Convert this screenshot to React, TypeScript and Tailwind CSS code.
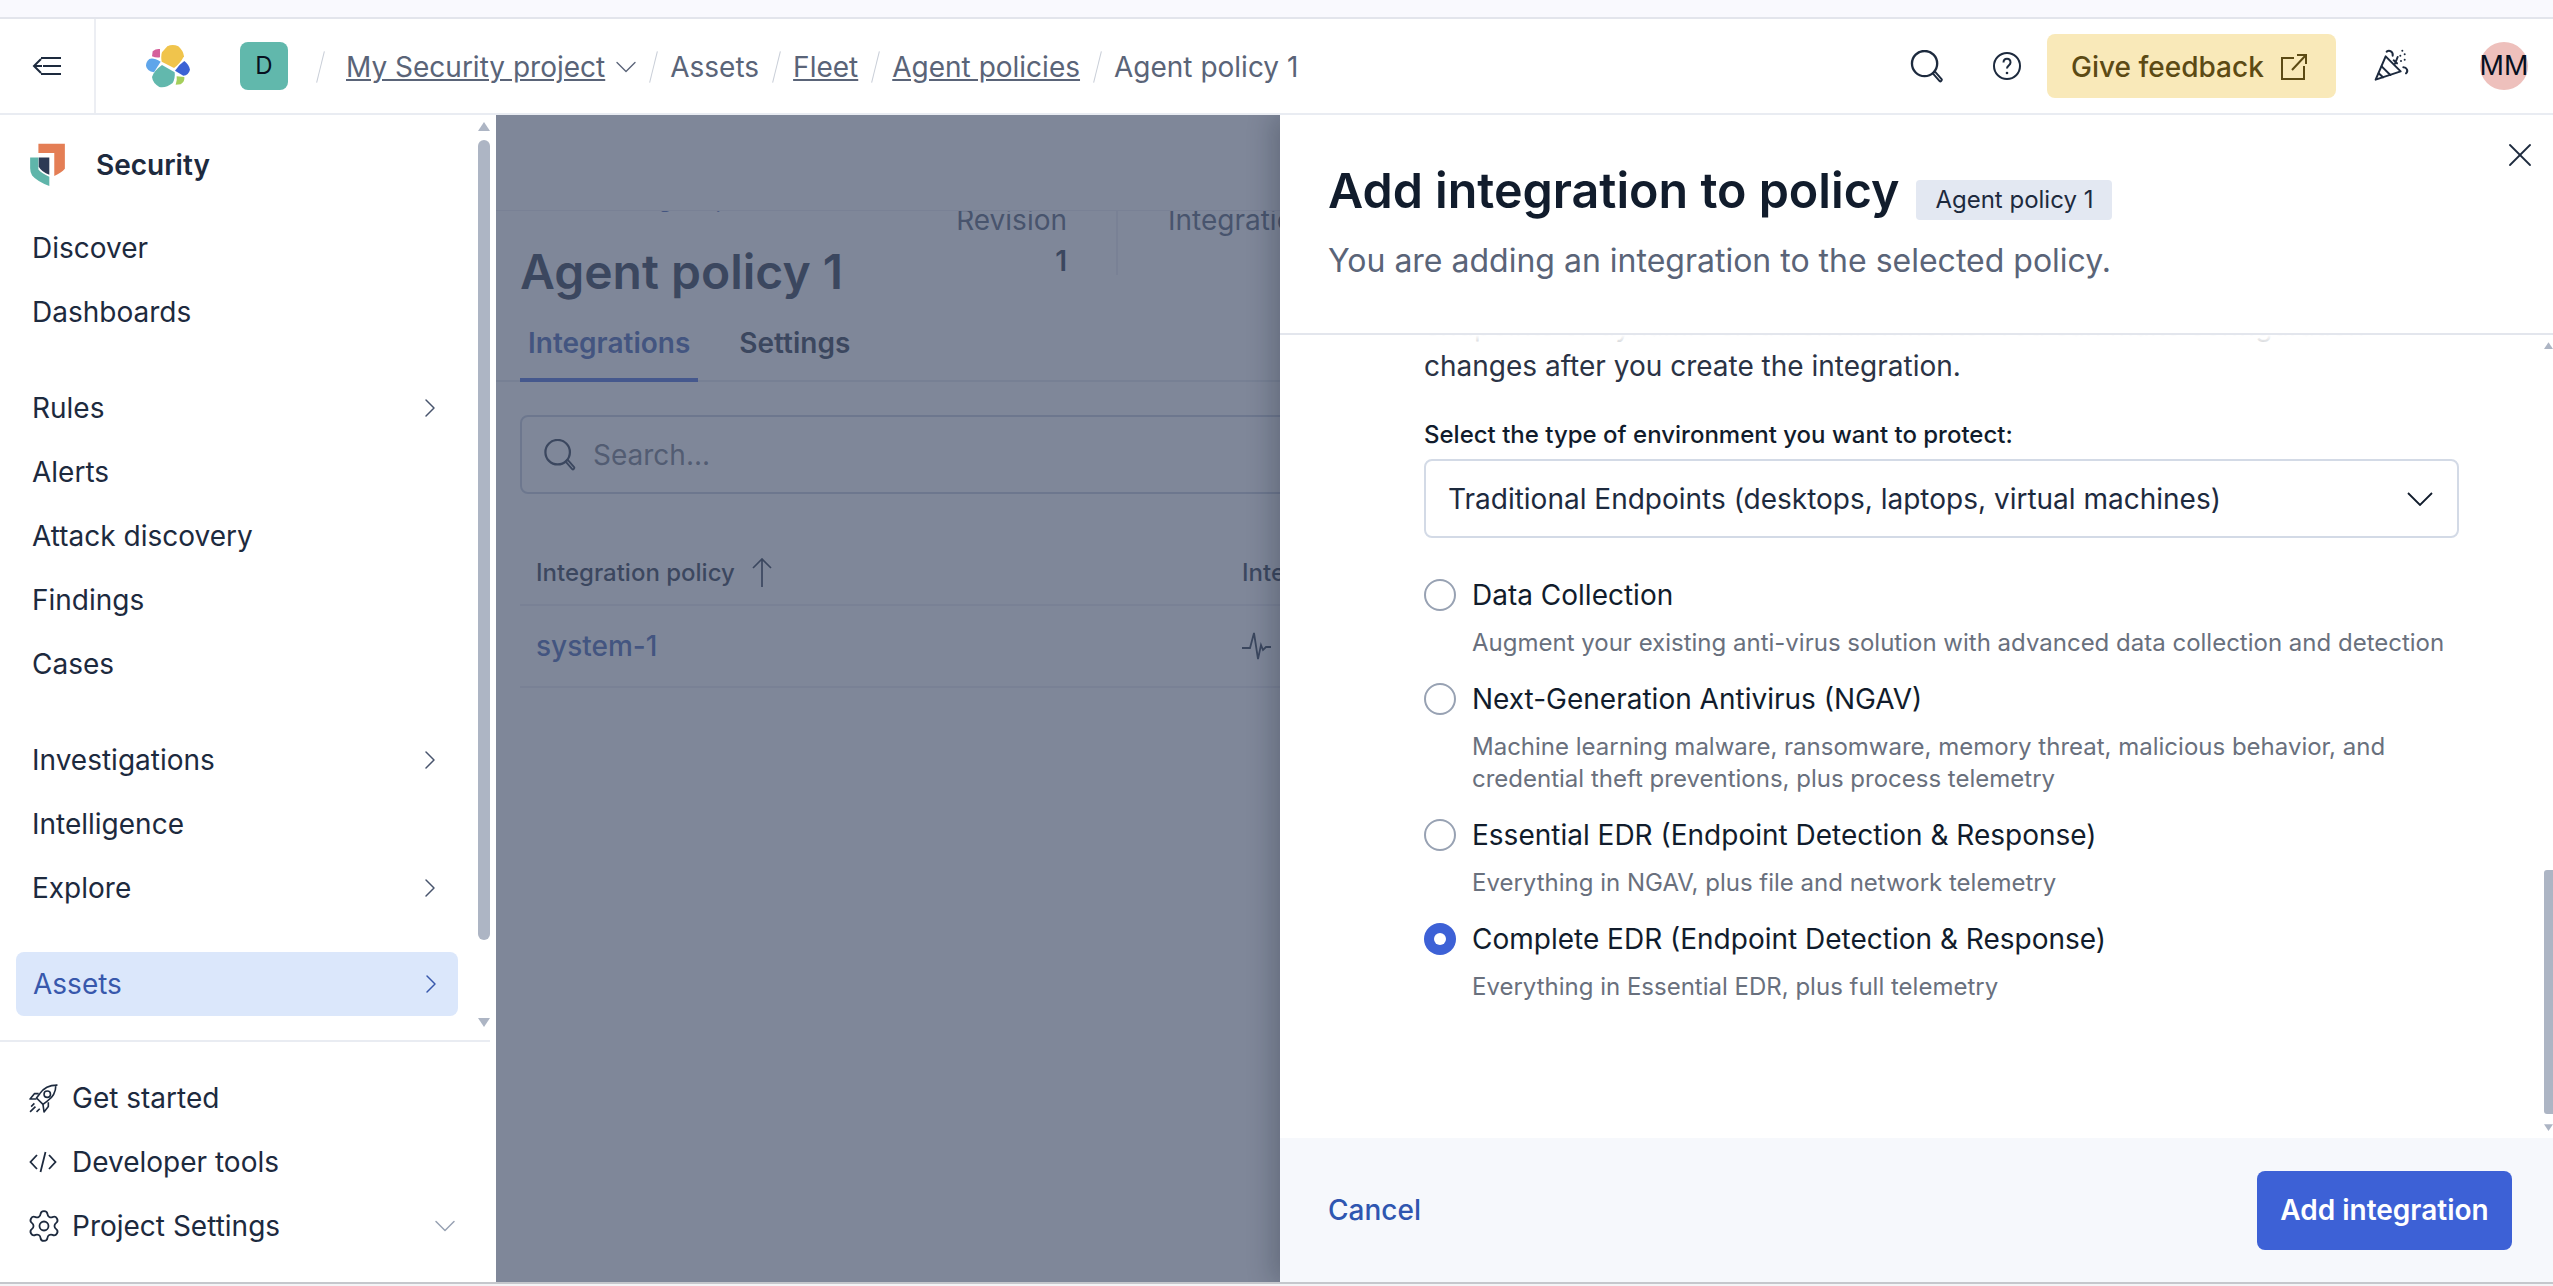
import React from 'react';
import { ChevronDown, ChevronRight, Settings, X } from 'lucide-react';

const navGroups = [
  [{ label: 'Discover' }, { label: 'Dashboards' }],
  [
    { label: 'Rules', arrow: true },
    { label: 'Alerts' },
    { label: 'Attack discovery' },
    { label: 'Findings' },
    { label: 'Cases' },
  ],
  [{ label: 'Investigations', arrow: true }, { label: 'Intelligence' }, { label: 'Explore', arrow: true }],
];

const radios = [
  { label: 'Data Collection', desc: ['Augment your existing anti-virus solution with advanced data collection and detection'] },
  {
    label: 'Next-Generation Antivirus (NGAV)',
    desc: ['Machine learning malware, ransomware, memory threat, malicious behavior, and', 'credential theft preventions, plus process telemetry'],
  },
  { label: 'Essential EDR (Endpoint Detection & Response)', desc: ['Everything in NGAV, plus file and network telemetry'] },
  { label: 'Complete EDR (Endpoint Detection & Response)', desc: ['Everything in Essential EDR, plus full telemetry'], checked: true },
];

const SearchIcon = ({ className }: { className?: string }) => (
  <svg viewBox="0 0 34 34" fill="none" stroke="currentColor" strokeWidth="2.4" className={className}>
    <ellipse cx="14.5" cy="14" rx="13" ry="13" />
    <path d="M23 24l2-2 7 8c.8 1-.9 3-2 2z" strokeWidth="2" strokeLinejoin="round" />
  </svg>
);

const ElasticLogo = () => (
  <svg viewBox="45 25 138 135" className="h-[45px] w-[46px]">
    <path d="M112 32Q128 24 145 32 160 45 162 62 150 85 132 97L95 78Q92 60 96 50z" fill="#f0c44c" />
    <path d="M68 47Q78 38 90 40L90 65Q78 67 66 62z" fill="#d5609b" />
    <path d="M58 70Q70 65 92 78L72 110Q50 105 48 90 48 78 58 70z" fill="#5fa5ea" />
    <path d="M163 76Q178 88 180 102 176 118 160 120L135 105Q145 88 163 76z" fill="#3b62d4" />
    <path d="M96 88L134 110Q136 128 128 142 108 158 88 154 68 142 66 124 72 105 96 88z" fill="#62b8ad" />
    <path d="M140 122L163 124Q165 138 152 146L137 147Q142 135 140 122z" fill="#a5cf5b" />
  </svg>
);

const SecurityLogo = () => (
  <svg viewBox="30 20 105 130" className="h-[43px] w-[35px] shrink-0">
    <path d="M55 22H135V98Q125 110 103 120V50H55z" fill="#e47e55" />
    <path d="M30 64H55V100Q65 112 88 122V150Q50 135 36 118 30 108 30 96z" fill="#5fb5aa" />
    <path d="M56 64H88V116Q65 108 56 92z" fill="#2c3a55" />
  </svg>
);

const RocketIcon = () => (
  <svg viewBox="0 0 27 27" fill="none" stroke="currentColor" strokeWidth="1.500" strokeLinejoin="round" className="h-[29px] w-[29px]">
    <path d="M26 1c-6 0-12 2-16 8l-3 4 6 6 4-3c6-4 8-10 8-15z" />
    <path d="M9 9H5l-4 5 6 0M18 17v4l-4 5-1-7" />
    <circle cx="17" cy="9.500" r="3" />
    <path d="M2 21l3-3M1 26l5-5M7 26l3-3" />
  </svg>
);

const CodeIcon = () => (
  <svg viewBox="0 0 28 22" fill="none" stroke="currentColor" strokeWidth="1.800" className="h-[22px] w-[28px]">
    <path d="M8 4L1.500 11 8 18M20 4l6.500 7L20 18M16.500 1L11.500 21" />
  </svg>
);

const PartyIcon = () => (
  <svg viewBox="0 0 165 150" fill="none" stroke="#1d2a3e" strokeWidth="6" strokeLinejoin="round" strokeLinecap="round" className="h-[50px] w-[55px]">
    <path d="M32 122L62 52l45 45z" />
    <path d="M50 82l26 26M41 103l13 12" />
    <path d="M65 38c8-6 20 0 18 12M90 74l8-20M86 64l10 9M115 85c10 0 16 10 8 18" />
    <g fill="#1d2a3e" stroke="none">
      <circle cx="112" cy="35" r="3" />
      <circle cx="119" cy="46" r="3" />
      <circle cx="106" cy="50" r="3" />
      <circle cx="119" cy="62" r="3" />
      <circle cx="108" cy="66" r="3" />
    </g>
  </svg>
);

const ScrollArrow = ({ down }: { down?: boolean }) => (
  <svg viewBox="0 0 12 9" className="h-[9px] w-full shrink-0">
    <path d={down ? 'M0 0h12L6 9z' : 'M6 0l6 9H0z'} fill="#adb5c4" />
  </svg>
);

const Slash = () => <span className="mx-[16.5px] h-[32px] w-px rotate-[14deg] bg-[#c9ced8]" />;

const App = () => {
  return (
    <div className="flex h-[1286px] w-[2553px] flex-col overflow-hidden bg-white font-['Inter',sans-serif] text-[28px] text-[#1d2a3e]">
      <div className="h-[19px] shrink-0 border-b-2 border-[#e3e5ec] bg-[#f9f9fe]" />

      {/* top bar */}
      <header className="relative z-20 flex h-[96px] shrink-0 items-center border-b-2 border-[#e9ecf2] bg-white">
        <div className="flex h-full w-[96px] items-center justify-center border-r-2 border-[#eceef3]">
          <svg viewBox="0 0 30 22" fill="none" stroke="#1d2a3e" strokeWidth="2" className="h-[22px] w-[30px]">
            <path d="M9 3h20M9 19h20M11 11h18M9 4l-7 7 7 7M2 11h8" />
          </svg>
        </div>
        <div className="ml-[49px]">
          <ElasticLogo />
        </div>
        <div className="ml-[49px] flex h-[48px] w-[48px] items-center justify-center rounded-lg bg-[#61b8ac] text-[24px] text-[#07101f]">D</div>
        <nav className="ml-[15px] mt-[2px] flex items-center text-[#5a6478]">
          <Slash />
          <span className="ml-[9px] underline">My Security project</span>
          <ChevronDown className="ml-[3px] -mr-[8px] h-[36px] w-[36px]" strokeWidth={0.9} />
          <Slash />
          <span>Assets</span>
          <Slash />
          <span className="underline">Fleet</span>
          <Slash />
          <span className="underline">Agent policies</span>
          <Slash />
          <span>Agent policy 1</span>
        </nav>
        <div className="ml-auto flex items-center">
          <SearchIcon className="h-[33px] w-[34px] text-[#1d2a3e]" />
          <svg viewBox="0 0 30 30" fill="none" stroke="#1d2a3e" strokeWidth="2" className="ml-[48px] h-[30px] w-[30px]">
            <circle cx="15" cy="15" r="13" />
            <path d="M11.5 11.5c0-5 7-5 7 0 0 3-3.500 3-3.500 6" />
            <circle cx="15" cy="22" r="1.300" fill="#1d2a3e" stroke="none" />
          </svg>
          <button className="ml-[25px] flex h-[64px] w-[289px] items-center rounded-lg bg-[#f9e9b9] pl-[24px] pt-[2px] font-medium text-[#5c4a14]">
            Give feedback
            <svg viewBox="0 0 28 28" fill="none" stroke="currentColor" strokeWidth="2" className="ml-[16px] h-[28px] w-[28px]">
              <path d="M14 5H2v21h22V13M17 2h9v9M26 2L12 17" />
            </svg>
          </button>
          <div className="-mt-[4px] ml-[29px]">
            <PartyIcon />
          </div>
          <div className="ml-[60px] mr-[25px] flex h-[48px] w-[48px] items-center justify-center rounded-full bg-[#eec0bc] text-[27px] text-[#07101f]">MM</div>
        </div>
      </header>

      <div className="flex min-h-0 flex-1">
        {/* side nav */}
        <aside className="flex w-[496px] shrink-0 flex-col border-r-[6px] border-white bg-white">
          <div className="flex min-h-0 flex-1">
            <div className="min-w-0 flex-1">
              <div className="flex h-[101px] items-center gap-[31px] pb-[2px] pl-[30px] font-semibold">
                <SecurityLogo />
                <span>Security</span>
              </div>
              {navGroups.map((group, i) => (
                <div key={i} className="mb-[32px]">
                  {group.map((item) => (
                    <div key={item.label} className="flex h-[64px] items-center justify-between pl-[32px] pr-[32px]">
                      {item.label}
                      {item.arrow && <ChevronRight className="h-[32px] w-[32px] text-[#48546d]" strokeWidth={1.1} />}
                    </div>
                  ))}
                </div>
              ))}
              <div className="ml-[16px] flex h-[64px] w-[442px] items-center justify-between rounded-lg bg-[#dbe7fb] pl-[17px] pr-[11px] text-[#3858ac]">
                Assets
                <ChevronRight className="h-[32px] w-[32px]" strokeWidth={1.1} />
              </div>
            </div>
            <div className="flex w-[12px] flex-col pb-[13px] pt-[7px]">
              <ScrollArrow />
              <div className="mt-[9px] h-[800px] rounded-full bg-[#adb5c4]" />
              <div className="flex-1" />
              <ScrollArrow down />
            </div>
          </div>
          <div className="h-[242px] shrink-0 border-t-2 border-[#e9ecf2] pt-[24px]">
            {[
              { label: 'Get started', icon: <RocketIcon /> },
              { label: 'Developer tools', icon: <CodeIcon /> },
              { label: 'Project Settings', icon: <Settings className="-ml-[3px] h-[36px] w-[36px]" strokeWidth={1.2} /> },
            ].map((item, i) => (
              <div key={item.label} className="flex h-[64px] items-center pl-[29px] pr-[27px]">
                <span className="flex w-[43px] shrink-0">{item.icon}</span>
                {item.label}
                {i === 2 && <ChevronDown className="ml-auto h-[36px] w-[36px] text-[#98a2b3]" strokeWidth={1} />}
              </div>
            ))}
          </div>
        </aside>

        {/* main page, dimmed behind the flyout */}
        <main className="relative flex min-w-0 flex-1 flex-col overflow-hidden bg-white">
          <div className="h-[95px] shrink-0" />
          <div className="min-h-0 flex-1 overflow-hidden border-t border-[#e9ecf2]">
            <div className="-mt-[28px] flex pl-[24px]">
              <div className="w-[547px]">
                <div className="flex h-[32px] items-center pl-[30px] text-[24px] text-[#3858ac]">View all agent policies</div>
                <div className="mt-[27px] text-[48px] font-semibold leading-[60px]">Agent policy 1</div>
              </div>
            </div>
            <div className="-mt-[97px] flex pl-[24px]">
              <div className="w-[547px] text-right text-[#48546d]">
                <div className="h-[38px] leading-[30px]">Revision</div>
                <div className="font-semibold leading-[36px] text-[#1d2a3e]">1</div>
              </div>
              <div className="ml-[49px] h-[70px] border-l-2 border-[#e9ecf2] pl-[50px] leading-[30px] text-[#48546d]">Integrations</div>
            </div>
            <div className="mt-[43px] flex h-[60px] gap-[33px] border-b-2 border-[#e3e6ed] pl-[24px] font-semibold">
              <div className="h-[60px] border-b-[4px] border-[#3d61d6] px-[8px] text-[#3858ac]">Integrations</div>
              <div className="px-[8px]">Settings</div>
            </div>
            <div className="mx-[24px] mt-[33px] flex h-[79px] items-center rounded-lg border-2 border-[#c2cadb] pl-[22px] text-[#69707d]">
              <SearchIcon className="h-[32px] w-[32px] text-[#1d2a3e]" />
              <span className="ml-[17px]">Search...</span>
            </div>
            <div className="mx-[24px] mt-[48px]">
              <div className="grid h-[64px] grid-cols-[706px_1fr] items-center border-b-2 border-[#e9ecf2] pl-[16px] text-[24px] font-medium">
                <span className="flex items-center gap-[17px]">
                  Integration policy
                  <svg viewBox="0 0 20 30" fill="none" stroke="currentColor" strokeWidth="1.700" className="h-[30px] w-[20px]">
                    <path d="M10 1v28M1 10l9-9 9 9" />
                  </svg>
                </span>
                <span>Integration</span>
              </div>
              <div className="grid h-[82px] grid-cols-[706px_1fr] items-center border-b-2 border-[#e9ecf2] pl-[16px]">
                <span className="font-medium text-[#3858ac]">system-1</span>
                <svg viewBox="0 0 30 30" fill="none" stroke="currentColor" strokeWidth="1.800" className="h-[30px] w-[30px]">
                  <path d="M0 17h8l4-15 4 26 3-14 2 5 3-3h5" />
                </svg>
              </div>
            </div>
          </div>

          {/* overlay mask */}
          <div className="absolute inset-0 bg-[rgba(72,84,109,0.7)]" />

          {/* flyout */}
          <section className="absolute inset-y-0 right-0 flex w-[1273px] flex-col bg-white shadow-[-8px_0_24px_rgba(7,16,31,0.22)]">
            <button className="absolute right-[13px] top-[20px] text-[#1d2a3e]">
              <X className="h-[40px] w-[40px]" strokeWidth={1.1} />
            </button>
            <div className="h-[220px] shrink-0 border-b-2 border-[#e3e6ed] pl-[48px] pt-[45px]">
              <div className="flex h-[62px] items-center">
                <h2 className="text-[48.4px] font-semibold text-[#111c2c]">Add integration to policy</h2>
                <span className="ml-[17px] mt-[18px] flex h-[40px] items-center rounded-[4px] bg-[#e3e8f2] px-[19px] text-[24px]">Agent policy 1</span>
              </div>
              <p className="mt-[15px] text-[32px] leading-[48px] text-[#5a6478]">You are adding an integration to the selected policy.</p>
            </div>

            <div className="flex min-h-0 flex-1">
              <div className="relative min-w-0 flex-1 overflow-hidden pl-[144px]">
                <div className="-mt-[29px] w-[1035px]">
                  <p className="leading-[40px] text-[#2b3345]">
                    <span className="block whitespace-nowrap">endpoints or dynamic cloud environments. You can make configuration</span>
                    <span className="block">changes after you create the integration.</span>
                  </p>
                  <label className="mt-[33px] block text-[24px] font-medium leading-[32px] text-[#111c2c]">Select the type of environment you want to protect:</label>
                  <div className="mt-[8px] flex h-[79px] items-center justify-between rounded-lg border-2 border-[#d3dae6] pl-[22px] pr-[24px]">
                    Traditional Endpoints (desktops, laptops, virtual machines)
                    <svg viewBox="0 0 26 14" fill="none" stroke="#111c2c" strokeWidth="1.800" className="h-[14px] w-[26px]">
                      <path d="M1 1l12 12L25 1" />
                    </svg>
                  </div>
                  <div className="mt-[33px] flex flex-col gap-[16px]">
                    {radios.map((r) => (
                      <div key={r.label} className="flex">
                        <span className="mt-[8px] flex h-[32px] w-[32px] shrink-0 items-center justify-center rounded-full">
                          {r.checked ? (
                            <span className="flex h-[32px] w-[32px] items-center justify-center rounded-full bg-[#3d61d6]">
                              <span className="h-[12px] w-[12px] rounded-full bg-white" />
                            </span>
                          ) : (
                            <span className="h-[32px] w-[32px] rounded-full border-2 border-[#98a2b3] bg-white" />
                          )}
                        </span>
                        <div className="ml-[16px]">
                          <div className="flex h-[48px] items-center text-[#111c2c]">{r.label}</div>
                          <div className="mt-[8px] text-[24px] leading-[32px] text-[#69707d]">
                            {r.desc.map((line) => (
                              <div key={line} className="whitespace-nowrap">{line}</div>
                            ))}
                          </div>
                        </div>
                      </div>
                    ))}
                  </div>
                </div>
                {/* scroll fade at the top of the body */}
                <div className="absolute inset-x-0 top-0 h-[16px] bg-linear-to-b from-white via-white/80 to-white/40" />
              </div>
              <div className="flex w-[9px] shrink-0 flex-col py-[6px]">
                <ScrollArrow />
                <div className="flex-1" />
                <div className="mb-[9px] h-[244px] rounded-l-[3px] bg-[#adb5c4]" />
                <ScrollArrow down />
              </div>
            </div>

            <div className="flex h-[144px] shrink-0 items-center justify-between bg-[#f6f8fc] pl-[48px] pr-[41px]">
              <span className="font-medium text-[#2f56b0]">Cancel</span>
              <button className="h-[79px] w-[255px] rounded-lg bg-[#3d61d6] font-semibold text-white">Add integration</button>
            </div>
          </section>
        </main>
      </div>
      <div className="h-[4px] shrink-0 border-t-2 border-[#c5c7cc] bg-[#f4f4f6]" />
    </div>
  );
};

export default App;
